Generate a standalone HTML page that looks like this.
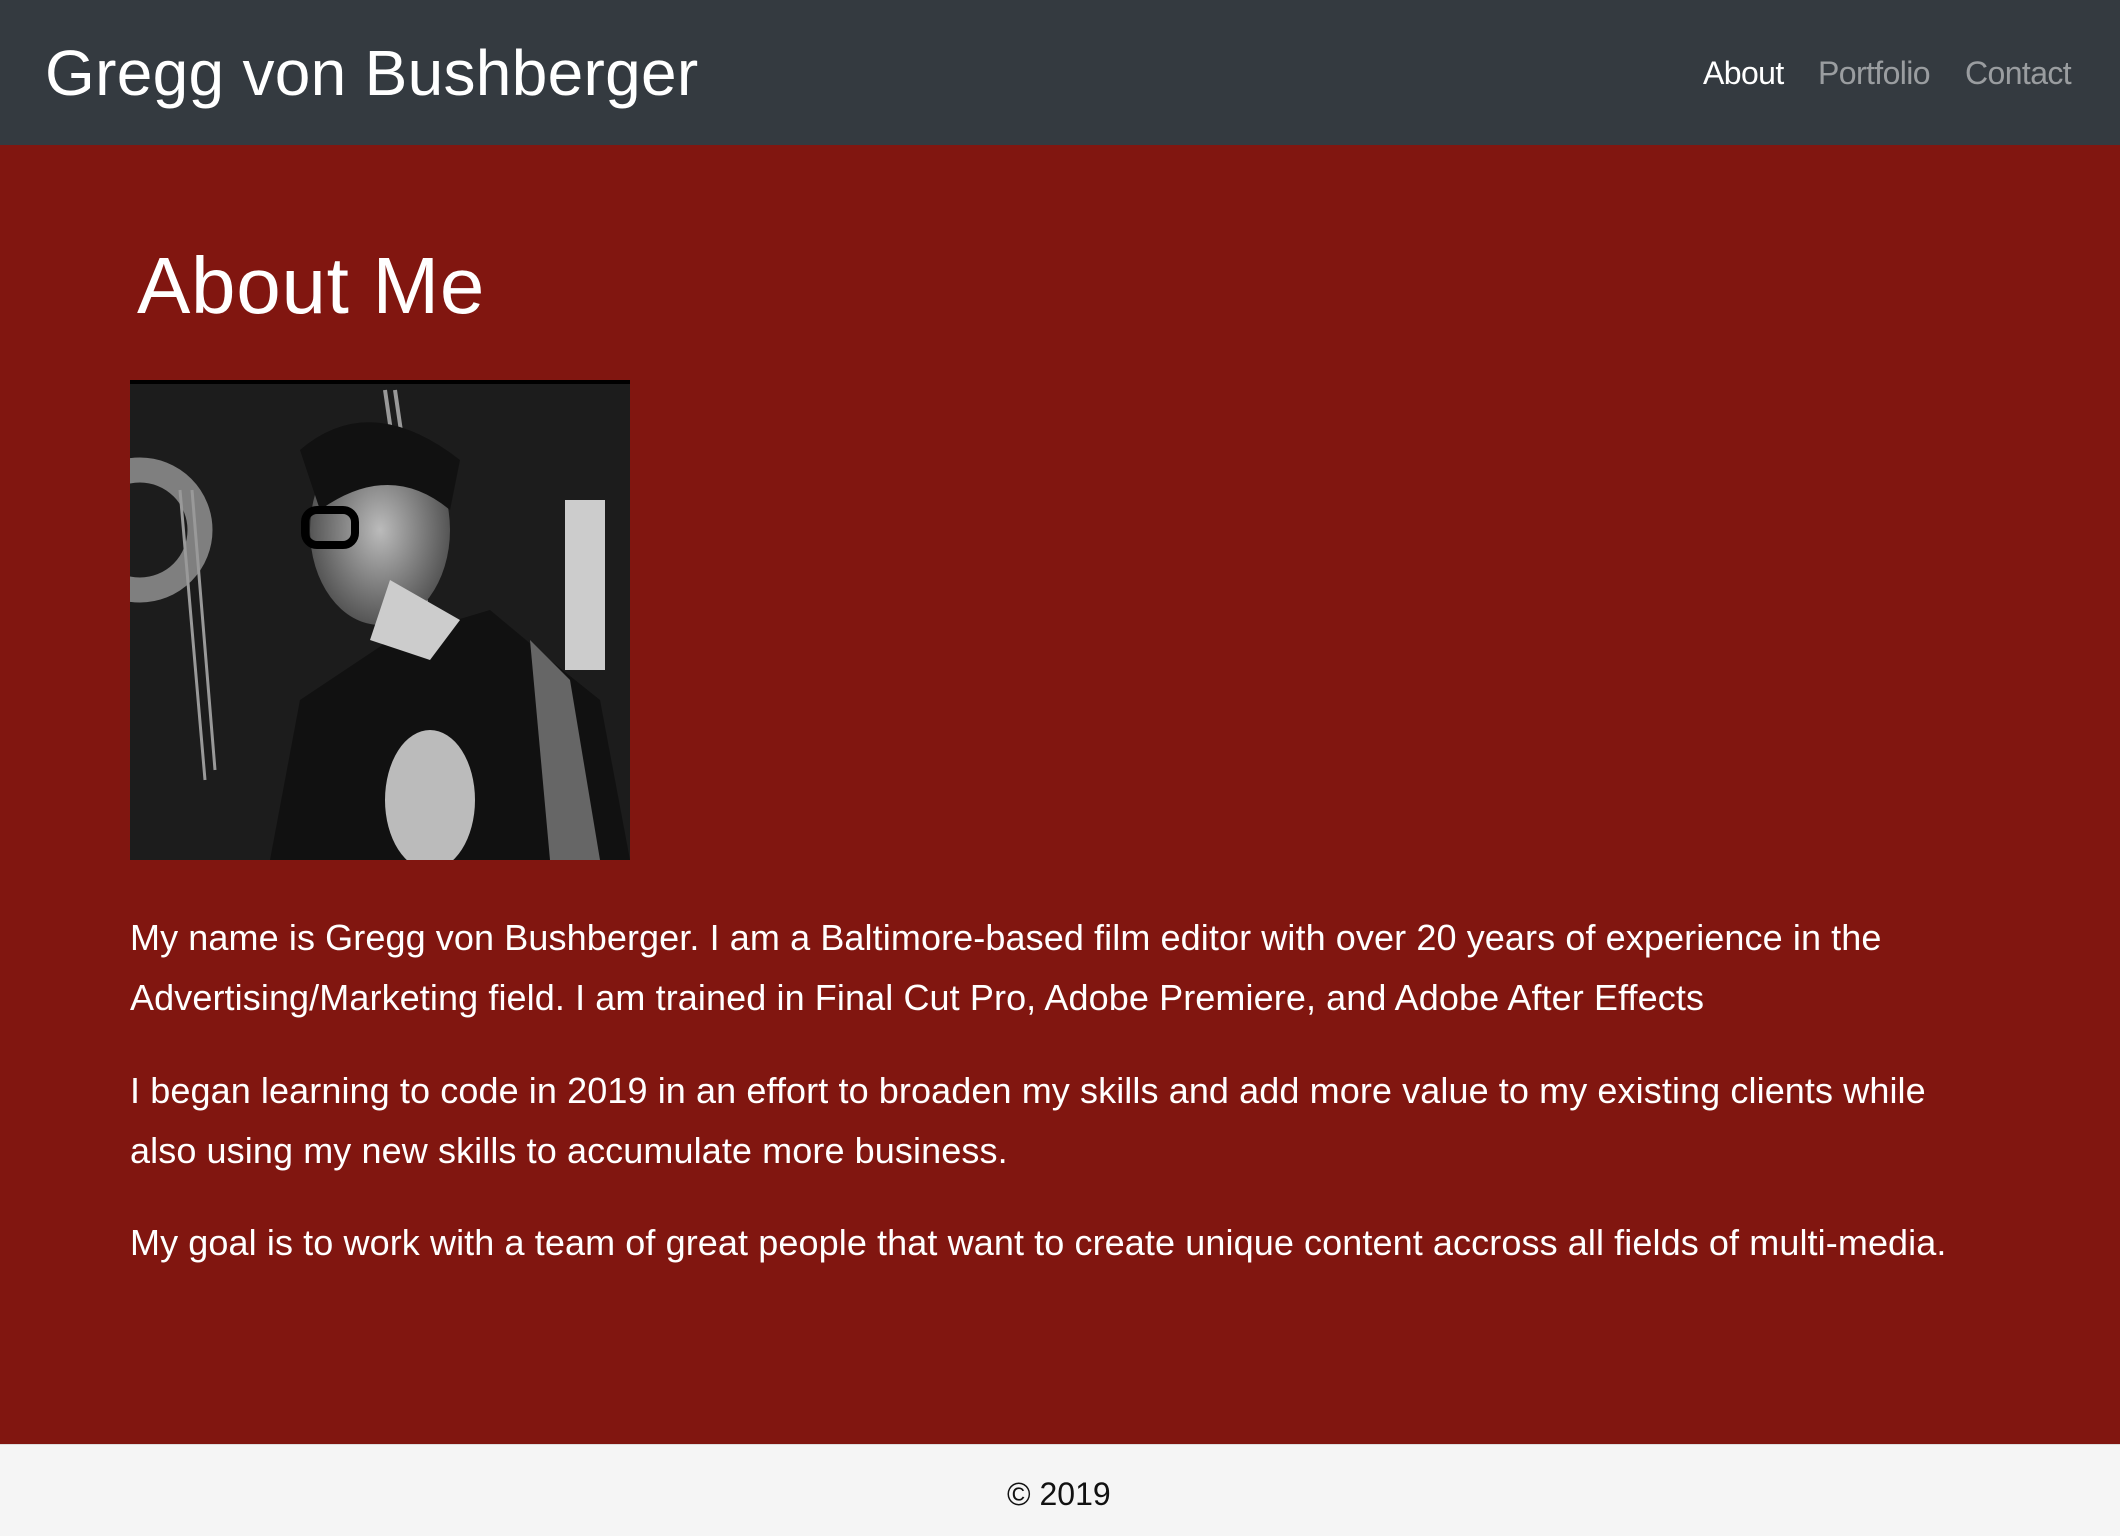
<!DOCTYPE html>
<html><head><meta charset="utf-8"><style>
*{margin:0;padding:0;box-sizing:border-box}
html,body{width:2120px;height:1536px;overflow:hidden;background:#811610;font-family:"Liberation Sans",Arial,sans-serif}
.nav{position:absolute;left:0;top:0;width:2120px;height:145px;background:#343a40}
.brand{position:absolute;left:45px;top:36px;font-size:64px;line-height:74px;color:#fff;letter-spacing:0.3px}
.nl{position:absolute;top:54px;font-size:32px;line-height:38px;color:rgba(255,255,255,.5);letter-spacing:-0.6px}
h1{position:absolute;left:137px;top:240px;font-size:80px;line-height:92px;font-weight:normal;color:#fff;letter-spacing:0.7px;font-weight:500}
.photo{position:absolute;left:130px;top:380px;width:500px;height:480px}
.p{position:absolute;left:130px;font-size:36px;line-height:60px;color:#fff;white-space:nowrap;letter-spacing:0.1px}
.foot{position:absolute;left:0;top:1444px;width:2120px;height:92px;background:#f5f5f5;border-top:1px solid #ddd}
.foot span{position:absolute;left:1007px;top:30px;font-size:32px;line-height:38px;color:#111}
</style></head><body>
<div class="nav">
<div class="brand">Gregg von Bushberger</div>
<div class="nl" style="left:1703px;color:#fff">About</div>
<div class="nl" style="left:1818px">Portfolio</div>
<div class="nl" style="left:1965px">Contact</div>
</div>
<h1>About Me</h1>
<svg class="photo" viewBox="0 0 500 480">
<defs><radialGradient id="f" cx="0.5" cy="0.5" r="0.5"><stop offset="0" stop-color="#bbb"/><stop offset="1" stop-color="#555"/></radialGradient></defs>
<rect width="500" height="480" fill="#1c1c1c"/>
<rect width="500" height="4" fill="#000"/>
<circle cx="10" cy="150" r="60" fill="none" stroke="#aaa" stroke-width="25" opacity=".7"/>
<path d="M50 110 L75 400 M62 110 L85 390" stroke="#999" stroke-width="3"/>
<path d="M255 10 L290 250 M265 10 L300 250" stroke="#999" stroke-width="4"/>
<rect x="435" y="120" width="40" height="170" fill="#ccc"/>
<path d="M140 480 L170 320 L260 260 L360 230 L420 280 L470 320 L500 480Z" fill="#111"/>
<path d="M400 260 L440 300 L470 480 L420 480Z" fill="#666"/>
<ellipse cx="300" cy="420" rx="45" ry="70" fill="#bbb"/>
<ellipse cx="250" cy="150" rx="70" ry="95" fill="url(#f)"/>
<path d="M170 70 Q240 10 330 80 L320 130 Q260 80 190 130Z" fill="#111"/>
<rect x="175" y="130" width="50" height="35" rx="12" fill="none" stroke="#000" stroke-width="8"/>
<path d="M260 200 L330 240 L300 280 L240 260Z" fill="#ccc"/>
</svg>
<div class="p" style="top:908px">My name is Gregg von Bushberger. I am a Baltimore-based film editor with over 20 years of experience in the</div>
<div class="p" style="top:968px">Advertising/Marketing field. I am trained in Final Cut Pro, Adobe Premiere, and Adobe After Effects</div>
<div class="p" style="top:1061px">I began learning to code in 2019 in an effort to broaden my skills and add more value to my existing clients while</div>
<div class="p" style="top:1121px">also using my new skills to accumulate more business.</div>
<div class="p" style="top:1213px">My goal is to work with a team of great people that want to create unique content accross all fields of multi-media.</div>
<div class="foot"><span>© 2019</span></div>
</body></html>
